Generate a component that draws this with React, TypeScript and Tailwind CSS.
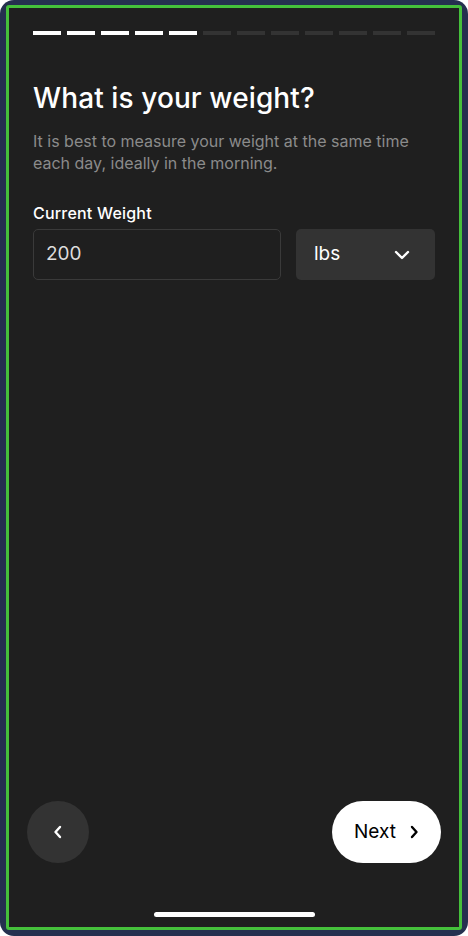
import React from "react";

export default function App() {
  const bars = Array.from({ length: 12 }, (_, i) => i < 5);
  return (
    <div className="w-[468px] h-[936px] bg-white" style={{ fontFamily: "Inter, 'Noto Sans', sans-serif" }}>
      <div className="w-full h-full rounded-[14px] bg-[#25304f] pt-[5px] pl-[6px] pr-[6px] pb-[6px]">
        <div className="w-full h-full border-[3px] border-[#45c03b] rounded-[3px] bg-[#1f1f1f] flex flex-col">
          <div className="px-[24px] pt-[23px] flex gap-[6px]">
            {bars.map((a, i) => (
              <div key={i} className={`h-[4px] flex-1 ${a ? "bg-white" : "bg-[#333333]"}`} />
            ))}
          </div>
          <h1 className="px-[24px] mt-[46px] text-[28px] leading-[34px] font-medium text-white tracking-[0.1px]">
            What is your weight?
          </h1>
          <p className="px-[24px] mt-[15px] text-[16px] leading-[22px] text-[#8b8b8b]">
            It is best to measure your weight at the same time each day, ideally in the morning.
          </p>
          <div className="px-[24px] mt-[29px] text-[16px] leading-[20px] font-medium text-white tracking-[0.2px]">Current Weight</div>
          <div className="px-[24px] mt-[6px] flex gap-[15px]">
            <div className="w-[248px] h-[51px] rounded-[5px] border border-[#3a3a3a] flex items-center pl-[12px] text-[19px] text-[#dddddd]">
              200
            </div>
            <div className="flex-1 h-[51px] rounded-[5px] bg-[#333333] flex items-center justify-between pl-[18px] pr-[25px] text-[19px] text-white">
              <span>lbs</span>
              <svg width="16" height="10" viewBox="0 0 16 10" fill="none">
                <path d="M2 2l6 6 6-6" stroke="white" strokeWidth="2.4" strokeLinecap="round" strokeLinejoin="round" />
              </svg>
            </div>
          </div>
          <div className="flex-1" />
          <div className="px-[18px] flex items-center justify-between">
            <div className="w-[62px] h-[62px] rounded-full bg-[#333333] flex items-center justify-center">
              <svg width="10" height="14" viewBox="0 0 10 14" fill="none">
                <path d="M7 2L2.5 7 7 12" stroke="white" strokeWidth="2.4" strokeLinecap="round" strokeLinejoin="round" />
              </svg>
            </div>
            <div className="w-[109px] h-[62px] rounded-full bg-white flex items-center pl-[22px] gap-[13px] text-[19px] text-black">
              <span>Next</span>
              <svg width="10" height="14" viewBox="0 0 10 14" fill="none">
                <path d="M3 2l4.5 5L3 12" stroke="black" strokeWidth="2.4" strokeLinecap="round" strokeLinejoin="round" />
              </svg>
            </div>
          </div>
          <div className="mt-[49px] mb-[10px] flex justify-center">
            <div className="w-[161px] h-[5px] rounded-full bg-white" />
          </div>
        </div>
      </div>
    </div>
  );
}
